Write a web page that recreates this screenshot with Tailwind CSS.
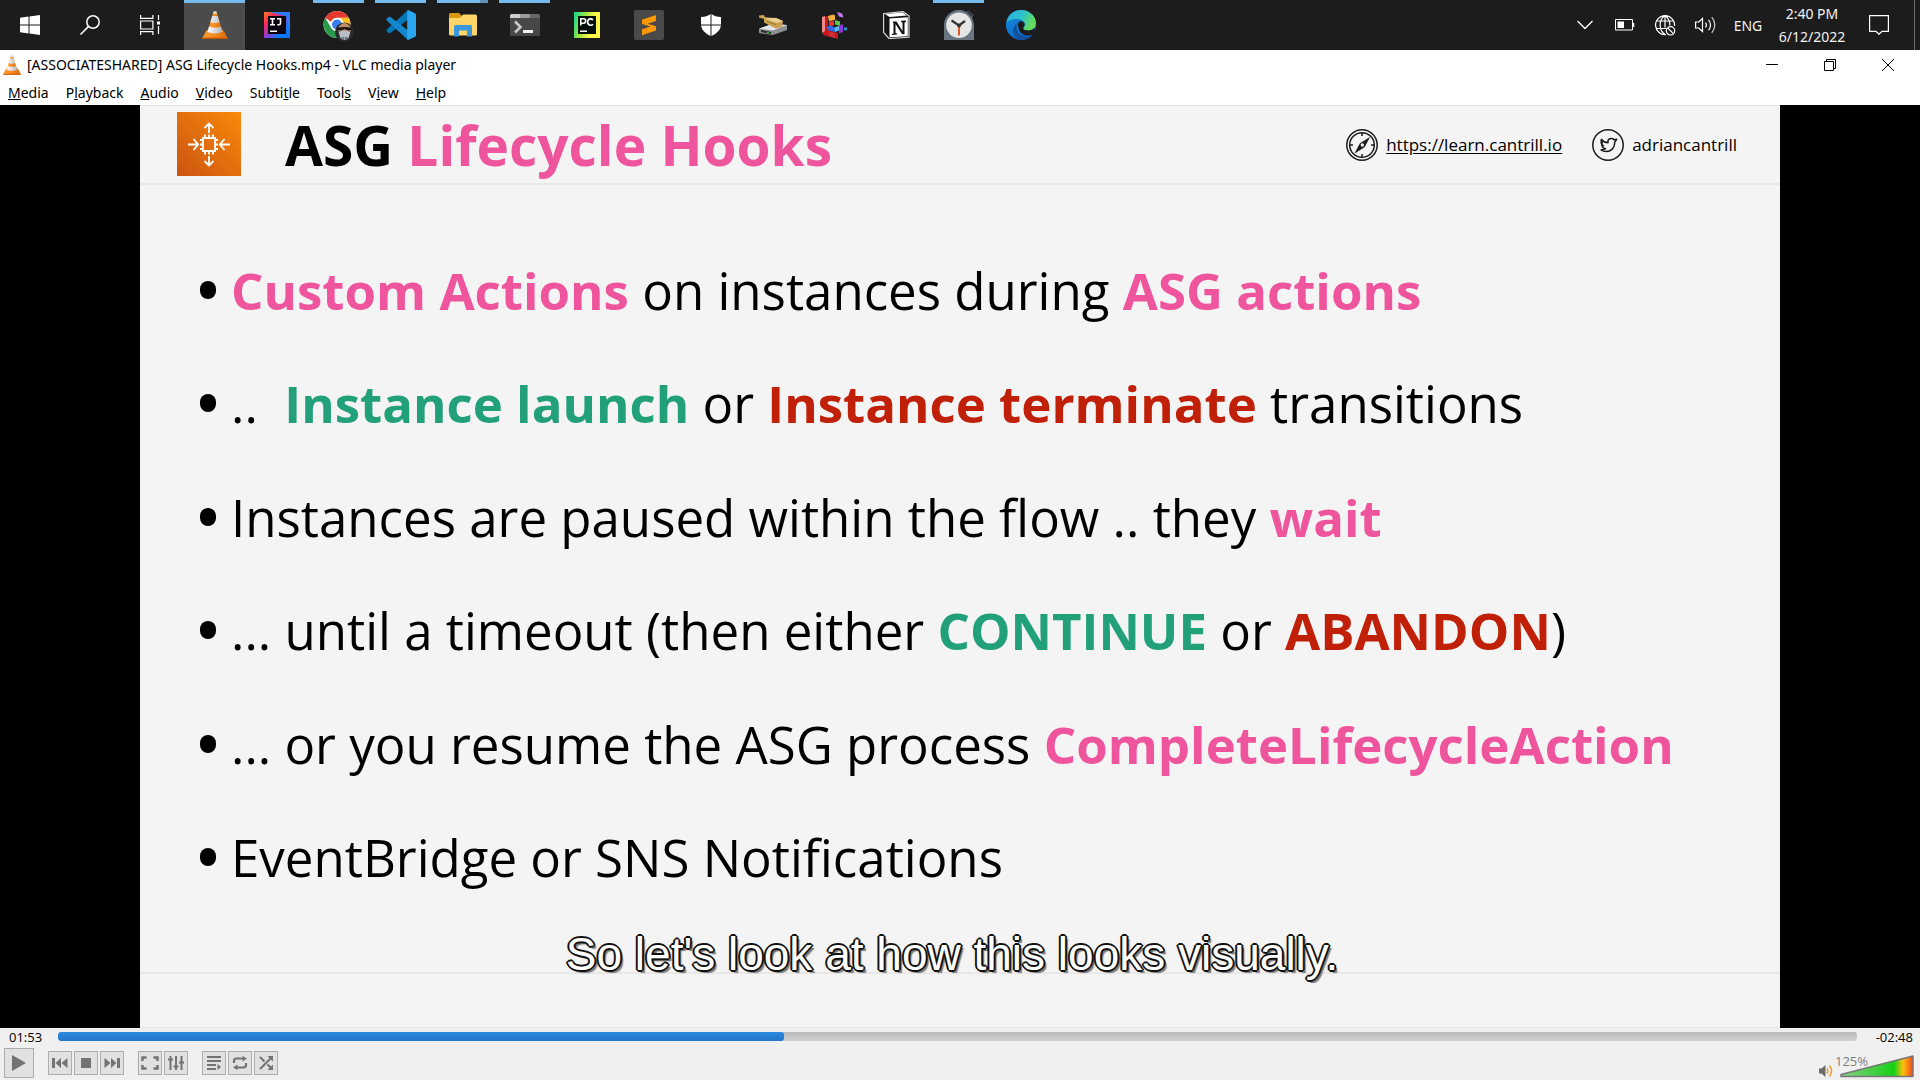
<!DOCTYPE html>
<html lang="en">
<head>
<meta charset="utf-8">
<title>[ASSOCIATESHARED] ASG Lifecycle Hooks.mp4 - VLC media player</title>
<script src="https://cdn.jsdelivr.net/npm/@tailwindcss/browser@4"></script>
</head>
<body class="flex h-screen flex-col overflow-hidden bg-[#f0f0f0] font-['Open_Sans',sans-serif] text-black">

<!-- Shared cone logo -->
<svg class="absolute size-0" aria-hidden="true">
  <defs>
    <linearGradient id="or" x1="0" x2="1"><stop offset="0" stop-color="#f9a03c"/><stop offset=".5" stop-color="#f68a1c"/><stop offset="1" stop-color="#d96a06"/></linearGradient>
    <linearGradient id="gr" x1="0" x2="1"><stop offset="0" stop-color="#fff"/><stop offset="1" stop-color="#b5b5b5"/></linearGradient>
    <symbol id="cone" viewBox="0 0 26 28">
      <path d="M5 19h16l1 1 3.600 7c.2.5 0 1-.6 1H1c-.6 0-.8-.5-.6-1L4 20z" fill="url(#or)"/>
      <path d="M.6 26.500h24.800c.4 1 .1 1.500-.4 1.500H1c-.6 0-.8-.6-.4-1.500z" fill="#c95c02"/>
      <path d="M11.600.6h2.800L20.500 21c-1.500 2.800-13.500 2.800-15 0z" fill="url(#or)"/>
      <path d="M10.300 5h5.400l1.900 6c-1.600 1.400-7.600 1.400-9.200 0zM7 15.500c2 1.500 10 1.500 12 0l1.400 5c-1.500 2.500-13.300 2.500-14.800 0z" fill="url(#gr)"/>
      <path d="M11.400 1c.3-1 2.900-1 3.200 0l.5 1.600c-.8.6-3.400.6-4.200 0z" fill="#d8d8d8"/>
    </symbol>
  </defs>
</svg>

<!-- Taskbar -->
<header class="flex h-[50px] shrink-0 items-stretch justify-between bg-[#1c1c1c] font-['Noto_Sans',sans-serif] text-[#f2f2f2]">
  <nav class="flex" aria-label="Taskbar">
    <button class="flex w-[60px] items-center justify-center" aria-label="Start"><svg class="size-5" viewBox="0 0 20 20" fill="#fff"><path d="M0 2.800 8.500 1.600V9.500H0zM9.500 1.400 20 0v9.500H9.500zM0 10.500h8.500v8L0 17.200zM9.500 10.500H20V20L9.500 18.600z"/></svg></button>
    <button class="flex w-[60px] items-center justify-center" aria-label="Search"><svg class="size-5" viewBox="0 0 20 20" fill="none" stroke="#fff" stroke-width="1.500"><circle cx="13" cy="7" r="6.200"/><path d="M8.600 11.400.5 19.500"/></svg></button>
    <button class="flex w-[64px] items-center pl-5" aria-label="Task View"><svg class="size-5" viewBox="0 0 20 20" fill="none" stroke="#fff" stroke-width="1.200"><path d="M.6 0v3.400h12.300V0M.6 20v-3.400h12.300V20M.6 6h12.300v8H.6zM18.500 0v5M18.500 11v8"/><path d="M17 6.500h3v3h-3z" fill="#fff" stroke="none"/></svg></button>

    <div class="flex gap-px">
      <button class="flex w-[61px] flex-col items-center border-t-[3px] border-[#76b9ed] bg-[#4b4b4b] pt-2" aria-label="VLC"><svg class="h-7 w-[26px]"><use href="#cone"/></svg></button>

      <button class="flex w-[61px] items-center justify-center" aria-label="IntelliJ IDEA"><svg class="size-[26px]" viewBox="0 0 26 26"><defs><linearGradient id="ij" x1="0" y1="0" x2="1" y2="1"><stop offset="0" stop-color="#fc801d"/><stop offset=".25" stop-color="#fe2857"/><stop offset=".5" stop-color="#9039d0"/><stop offset=".75" stop-color="#087cfa"/><stop offset="1" stop-color="#1c6cf5"/></linearGradient></defs><path d="M0 0h26v26H0z" fill="url(#ij)"/><path d="M5 0h21v19L22 4z" fill="#2c7df5"/><path d="M4 4h18v18H4z" fill="#0b0210"/><path d="M6 6.700h5M8.500 6.700v6M6 12.700h5M13 6.700h3.500v4.500q0 1.500-1.800 1.500h-1.500" stroke="#fff" stroke-width="1.600" fill="none"/><path d="M6 18.500h7v1.500H6z" fill="#fff"/></svg></button>

      <button class="flex w-[61px] flex-col items-center" aria-label="Google Chrome"><span class="h-[3px] w-[51px] bg-[#76b9ed]"></span><svg class="mt-2 h-[31px] w-[31px]" viewBox="0 0 31 31"><circle cx="14" cy="13.500" r="13.500" fill="#fff"/><path d="M2.300 6.800A13.500 13.500 0 0 1 25.700 6.800H14a6.700 6.700 0 0 0-6 4z" fill="#e5392f"/><path d="M2.300 6.800a13.500 13.500 0 0 0 11.700 20.200l5.800-10.100a6.700 6.700 0 0 1-11.600 0z" fill="#279b4b"/><path d="M25.700 6.800A13.500 13.500 0 0 1 14 27l5.800-10.100A6.700 6.700 0 0 0 17 7.300z" fill="#fbc116"/><circle cx="14" cy="13.500" r="6.300" fill="#fff"/><circle cx="14" cy="13.500" r="5" fill="#3b7de9"/><circle cx="21.500" cy="21" r="9.500" fill="#2a292b"/><path d="M15.500 16q6-8 12 0l.5 4h-13z" fill="#c58d64"/><path d="M14.500 16.800q7-1.800 14 0v2q-3.500 1.500-7-.8-3.500 2.300-7 .8z" fill="#15151b"/><path d="M15.500 20.500q6-1.500 12 0l-1.800 6.500q-4.200 4-8.400 0z" fill="#b9bdc5"/><path d="M18.500 26h6l-.5 2.500q-2.500 1.500-5 0z" fill="#3c3f46"/><path d="M20 26v2.800m1.500-2.800v3m1.500-3v2.800" stroke="#d5d8de" stroke-width=".7"/></svg></button>

      <button class="flex w-[61px] flex-col items-center" aria-label="Visual Studio Code"><span class="h-[3px] w-[51px] bg-[#76b9ed]"></span><svg class="mt-[7px] size-[30px]" viewBox="0 0 30 30"><path d="M22 0 1 19.200q-1.200 1 0 2.200l1.600 1.500q.9.700 1.900 0L24 8z" fill="#0077b9"/><path d="M22 30 1 10.800q-1.200-1 0-2.200l1.600-1.500q.9-.7 1.900 0L24 22z" fill="#1488cd"/><path d="M22.200 30q-1.200-.4-1-1.500V1.500q-.2-1.100 1-1.500L29 3.200q1 .5 1 1.600v20.400q0 1.100-1 1.600z" fill="#2aa7f0"/></svg></button>

      <button class="flex w-[61px] flex-col items-center" aria-label="File Explorer"><span class="h-[3px] w-[51px] border-r-[8px] border-[#5e92bb] bg-[#76b9ed]"></span><svg class="mt-2.5 h-[25px] w-[28px]" viewBox="0 0 28 25"><path d="M0 1.500Q0 0 1.500 0H10l3 3v6H0z" fill="#d99a12"/><path d="M0 5h11l3-3.500h12.500Q28 1.500 28 3v18q0 1.500-1.500 1.500h-25Q0 22.500 0 21z" fill="#fdd667"/><path d="M5 23.500v-9.500q0-2 2-2h14q2 0 2 2v9.500h-5v-6h-8v6z" fill="#3a96dd"/></svg></button>

      <button class="flex w-[61px] flex-col items-center" aria-label="Terminal"><span class="h-[3px] w-[51px] bg-[#76b9ed]"></span><svg class="mt-[11px] h-[22px] w-[30px]" viewBox="0 0 30 22"><rect width="30" height="22" rx="1.500" fill="#474747"/><path d="M0 4V1.500Q0 0 1.500 0H10v4z" fill="#ccc"/><path d="M10 0h10v4H10z" fill="#999"/><path d="M20 0h8.500Q30 0 30 1.500V4H20z" fill="#666"/><path d="M5 7.500 10.500 13 5 18.500" stroke="#c8c8c8" stroke-width="2.600" fill="none"/><path d="M13 16h10v3H13z" fill="#f2f2f2"/></svg></button>

      <button class="flex w-[61px] items-center justify-center" aria-label="PyCharm"><svg class="size-[26px]" viewBox="0 0 26 26"><defs><linearGradient id="pc" x1="0" y1=".3" x2="1" y2=".6"><stop offset="0" stop-color="#21d789"/><stop offset=".35" stop-color="#9fe83d"/><stop offset=".7" stop-color="#fcf84a"/></linearGradient></defs><path d="M0 0h26v26H0z" fill="url(#pc)"/><path d="M4 4h18v18H4z" fill="#041008"/><path d="M6.800 13.500V6.800h2.700q2.200 0 2.200 2.200t-2.200 2.200H7M19 8Q17.600 6.600 16 6.900q-2.300.5-2.300 3.200T16 13.200q1.800.3 3-1" stroke="#fff" stroke-width="1.600" fill="none"/><path d="M6 18.500h7v1.500H6z" fill="#fff"/></svg></button>

      <button class="flex w-[61px] items-center justify-center" aria-label="Sublime Text"><svg class="size-[30px]" viewBox="0 0 30 30"><rect width="30" height="30" rx="2" fill="#4a4a4a"/><path d="M22 5v6L13.500 13.700 22 16.300v4.200L8 25.300v-6L16.500 16.600 8 14V9.700z" fill="#ff9800"/></svg></button>

      <button class="flex w-[61px] items-center justify-center" aria-label="Windows Security"><svg class="h-[22px] w-5" viewBox="0 0 20 22" fill="#fff"><path d="M9.500 0v10.400H0V3q6 0 9.500-3zM10.500 0Q14 3 20 3v7.400h-9.500zM0 11.400h9.500V22Q1 18 0 11.400zM20 11.400h-9.500V22Q19 18 20 11.400z"/></svg></button>

      <button class="flex w-[61px] items-center justify-center" aria-label="Disk Utility"><svg class="h-5 w-[28px]" viewBox="0 0 28 20"><path d="M0 14l13-5 15 1v5l-14 5L0 18z" fill="#8c8f93"/><path d="M0 13.500 13 9l15 1-14 5.500z" fill="#e6e7e8"/><path d="M2 15l10 2v2L2 17z" fill="#252b25"/><path d="M8 16.800l2 .4v1l-2-.4z" fill="#35e035"/><path d="M0 .5 5 0l1 2.200L17 3l7 3-1 6-6 1.500L5 7.500V4L0 2.500z" fill="#c9a150"/><path d="M5 3.500 17 3l7 3-6 2z" fill="#ead08f"/><path d="M8 6.500l9 3" stroke="#8a6a28" stroke-width=".8"/></svg></button>

      <button class="flex w-[61px] items-center justify-center" aria-label="Disk Defragmenter"><svg class="size-[28px]" viewBox="0 0 28 28"><path d="M1 6l6-1v14l10 3v6L2 24z" fill="#c9161d"/><path d="M1 6l3-1v15l-3 2z" fill="#f08a8a"/><path d="M7 5l5-1.500 2 1V9l-6 1z" fill="#f7b13a"/><path d="M8 10.500 13 10v4.500l-5 .5z" fill="#e9382d"/><path d="M14 9l5 1.500v4.500l-5-1.500z" fill="#5fc552"/><path d="M5 16l5-1.500 4 2V21l-6-1.500z" fill="#2b6be8"/><path d="M13.500 16.500 18 15v4.500L14 21z" fill="#59b8f5"/><path d="M18 14.500l4-1.500v8l-4 1.500z" fill="#8f38d8"/><path d="M8 20.500l6 1.500v5l-6-2z" fill="#c8303a"/><path d="M16 1l5 1.500 1.500 4L18 5.500z" fill="#c77cf2"/><path d="M23 16.500h3v2.800h-3z" fill="#1e9ad6"/></svg></button>

      <button class="flex w-[61px] items-center justify-center" aria-label="Notion"><svg class="h-7 w-[27px]" viewBox="0 0 27 28"><path d="M.6 2.500 20 .6l6 4.200v21.500L6 27.500.6 21.500z" fill="#151515" stroke="#d5d5d5" stroke-width="1.200"/><path d="M2 3 19.500 1.500 24 4.600 6.500 6z" fill="#fff"/><path d="M6.500 7.500 24.800 6.300v19L6.500 26.300z" fill="#fff"/><path d="M9.500 10.500h4l6 9.500v-8.500l-1.500-.5v-1.200l5-.3V11l-1.500.5V23l-2.300.3L12.500 13v9l1.700.6v1L9 24v-1l1.500-.6V12z" fill="#111"/></svg></button>

      <button class="flex w-[61px] flex-col items-center" aria-label="Alarms and Clock"><span class="h-[3px] w-[51px] bg-[#76b9ed]"></span><svg class="mt-[7px] size-[30px]" viewBox="0 0 30 30"><path d="M0 15A15 15 0 0 1 22.500 2L24 .5 29.500 5 28 8q2 3 2 7v15H0z" fill="#697580"/><path d="M24 .5 29.500 5 27.500 7 22.500 2z" fill="#373c42"/><circle cx="15" cy="15.200" r="12.800" fill="#e6e6e6"/><path d="M7.500 10.500 15 15.500 21 11" stroke="#333" stroke-width="2.200" fill="none"/><path d="M15 15v10.500" stroke="#dd4719" stroke-width="1.800"/><circle cx="15" cy="15.500" r="2" fill="#333"/></svg></button>

      <button class="flex w-[61px] items-center justify-center" aria-label="Microsoft Edge"><svg class="size-[30px]" viewBox="0 0 30 30"><defs><linearGradient id="e1" x1="0" y1="0" x2="1" y2=".4"><stop offset="0" stop-color="#2aa9e8"/><stop offset=".55" stop-color="#2dc3cb"/><stop offset="1" stop-color="#66dc58"/></linearGradient><linearGradient id="e2" x1="0" y1="0" x2=".6" y2="1"><stop offset="0" stop-color="#1392dc"/><stop offset="1" stop-color="#0b62c4"/></linearGradient></defs><circle cx="15" cy="15" r="15" fill="url(#e2)"/><path d="M.4 12.500C2 4.500 8 0 15 0c9 0 15 6.500 15 13 0 5-3.500 7.500-7.500 7.500-3.500 0-5.300-1-5.300-2.300 0-.9 1.600-1.500 1.600-3.900 0-3-3.300-5.300-7.300-5.300C6 9 2 10.500.4 12.500z" fill="url(#e1)"/><path d="M11.500 13c-3 5 .5 13.500 8.500 13.800 3 .1 6-1.300 7-2.300C23 29.500 18 30.500 14 30 6.500 28 5 17 11.500 13z" fill="#124f9c"/><path d="M12 14.500c0-2.500 2.200-3.800 4.300-3.100 1.700.7 2.500 2 2.500 3.200 0 2.100-1.600 2.700-1.600 3.600 0 1.300 1.800 2.300 5.300 2.300 2.500 0 4.500-.9 5.800-2.400L30 24.500l-3-.3q-1.300 1.300-5.500 1.300C15 25.500 12 19.500 12 14.500z" fill="#1c1c1c"/></svg></button>
    </div>
  </nav>

  <div class="flex items-stretch pr-[5px] text-sm leading-[23px]">
    <button class="flex w-10 items-center justify-center" aria-label="Show hidden icons"><svg class="h-2.5 w-4" viewBox="0 0 16 10" fill="none" stroke="#fff" stroke-width="1.300"><path d="M.5 1 8 8.500 15.500 1"/></svg></button>
    <button class="flex w-10 items-center justify-center" aria-label="Battery"><svg class="h-3 w-5" viewBox="0 0 20 12"><path d="M.5.5h17v10.500H.5z" fill="none" stroke="#fff"/><path d="M2.500 2.500H9v6.500H2.500zM18 4h1.300v4H18z" fill="#fff"/></svg></button>
    <button class="flex w-10 items-center justify-center" aria-label="Network"><svg class="size-[21px]" viewBox="0 0 21 21" fill="none" stroke="#fff" stroke-width="1.200"><path d="M11 19.500A9.500 9.500 0 1 1 19.500 11M10 19.500C3.500 15 3.500 5 10 .6M10 .6c4 3 5 6.500 4.900 10M1.500 6h17M1 13.500h10.500M10 .6v12"/><circle cx="15.500" cy="15.800" r="4.200"/><path d="m12.600 13 5.900 5.600"/></svg></button>
    <button class="flex w-10 items-center justify-center" aria-label="Volume"><svg class="h-[18px] w-[21px]" viewBox="0 0 21 18" fill="none" stroke="#fff" stroke-width="1.200"><path d="M.6 6h3.200L7.500 2.500v13L3.800 12H.6z"/><path d="M10.500 6.500q1.800 2.500 0 5M13.500 3.800q4 5.200 0 10.400"/><path d="M16.800 1.200q6 7.800 0 15.600" stroke="#ccc"/></svg></button>
    <button class="w-[46px]">ENG</button>
    <button class="flex w-[82px] flex-col items-center pt-0.5"><span>2:40 PM</span><span>6/12/2022</span></button>
    <button class="flex w-[61px] items-center pl-4" aria-label="Notifications"><svg class="size-5" viewBox="0 0 20 20" fill="none" stroke="#fff" stroke-width="1.200"><path d="M.6.6h18.800v15.800H13L10 19.300 7 16.400H.6z"/></svg></button>
    <span class="w-px bg-[#6c6c6c]"></span>
  </div>
</header>

<!-- Window title and menu -->
<div class="flex h-[30px] shrink-0 items-center justify-between bg-white px-[3px] font-['Noto_Sans',sans-serif] text-sm">
  <div class="flex items-center gap-1.5"><svg class="h-5 w-[18px]"><use href="#cone"/></svg><span>[ASSOCIATESHARED] ASG Lifecycle Hooks.mp4 - VLC media player</span></div>
  <div class="flex">
    <button class="flex w-[58px] justify-center" aria-label="Minimize"><svg class="size-3" viewBox="0 0 12 12"><path d="M0 5h12v1H0z"/></svg></button>
    <button class="flex w-[58px] justify-center" aria-label="Restore"><svg class="size-3" viewBox="0 0 12 12" fill="none" stroke="#000"><path d="M.5 2.500h9v9h-9zM2.500 2.500v-2h9v9h-2"/></svg></button>
    <button class="flex w-[58px] justify-center" aria-label="Close"><svg class="size-3" viewBox="0 0 12 12" fill="none" stroke="#000"><path d="m0 0 12 12M12 0 0 12"/></svg></button>
  </div>
</div>
<nav class="flex h-[25px] shrink-0 items-center gap-[17px] bg-white pl-2 font-['Noto_Sans',sans-serif] text-sm" aria-label="Menu">
  <button><u>M</u>edia</button><button>P<u>l</u>ayback</button><button><u>A</u>udio</button><button><u>V</u>ideo</button><button>Subti<u>t</u>le</button><button>Tool<u>s</u></button><button>V<u>i</u>ew</button><button><u>H</u>elp</button>
</nav>

<!-- Video -->
<main class="flex min-h-0 flex-1 justify-center bg-black px-[140px]">
  <article class="relative flex w-full flex-col border-t border-b border-[#e4e4e4] bg-[#f4f4f4]">
    <div class="flex h-[79px] shrink-0 items-start border-b-2 border-[#e8e8e8] pl-[37px] pr-[43px]">
      <svg class="mt-1.5 size-16" viewBox="0 0 64 64"><defs><linearGradient id="aws" x1="0" y1="1" x2="1" y2="0"><stop offset="0" stop-color="#cb5412"/><stop offset="1" stop-color="#f98a09"/></linearGradient></defs><path d="M0 0h64v64H0z" fill="url(#aws)"/><g fill="none" stroke="#fff" stroke-width="1.800"><path d="M26 26h12v13H26zM28 22.500V26m4-3.500V26m4-3.500V26M28 39v3.500m4-3.500v3.500m4-3.500v3.500M23 28h3m-3 4.500h3m-3 4.500h3M38 28h3m-3 4.500h3m-3 4.500h3"/><path d="M32 21V11.500M27.500 16l4.500-4.500L36.500 16M32 44v9.500M27.500 49l4.500 4.500 4.500-4.500M11 32.500h10M16.500 27l4.700 5.500-4.700 5.500M53 32.500H43M47.500 27l-4.700 5.500 4.700 5.500"/></g></svg>
      <h1 class="ml-11 text-[55px] font-bold leading-[78px]">ASG <span class="text-[#ee559d]">Lifecycle Hooks</span></h1>
      <div class="ml-auto flex items-center self-center text-[17px] leading-6">
        <svg class="mr-2 size-8" viewBox="0 0 32 32" fill="none" stroke="#1a1a1a" stroke-width="1.500"><circle cx="16" cy="16" r="15.200"/><circle cx="16" cy="16" r="12.300"/><path d="M16 4v3m0 18v3M4 16h3m18 0h3"/><path d="M23.500 8.500 18.500 18l-9.500 6 5-9.500z" fill="#1a1a1a" stroke-width=".5"/><circle cx="16.300" cy="16" r="1.700" fill="#f3f3f3" stroke="none"/></svg>
        <a class="underline underline-offset-2" href="https://learn.cantrill.io">https://learn.cantrill.io</a>
        <svg class="ml-[30px] mr-2 size-8" viewBox="0 0 32 32" fill="none" stroke="#1a1a1a" stroke-width="1.500" stroke-linejoin="round"><circle cx="16" cy="16" r="15.200"/><path d="M9.500 10.500q2.500 3 6.500 3.300-.5-4.300 3.500-4.300 1.500 0 2.500 1.200l2.800-.5-2 3c0 6-4 9.300-8.500 9.300-2.500 0-4.300-.8-5.300-1.500 2 0 3.500-.5 4.500-1.300-2-.3-3-1.200-3.500-2.700l1.500-.2q-2.500-1.300-2.500-3.500l1.500.4q-2-1.500-1-3.200z"/></svg>
        <span>adriancantrill</span>
      </div>
    </div>

    <div class="flex flex-1 flex-col border-b-2 border-[#e8e8e8] pb-[58px] pl-[60px] pt-12">
      <ul class="grid flex-1 grid-rows-6 whitespace-nowrap text-[51px] leading-[70px]">
        <li class="flex items-center gap-[15px]"><i class="h-[18px] w-4 rounded-full bg-black"></i><p><b class="text-[#ee559d]">Custom Actions</b> on instances during <b class="text-[#ee559d]">ASG actions</b></p></li>
        <li class="flex items-center gap-[15px]"><i class="h-[18px] w-4 rounded-full bg-black"></i><p>..&nbsp; <b class="text-[#22a079]">Instance launch</b> or <b class="text-[#c02008]">Instance terminate</b> transitions</p></li>
        <li class="flex items-center gap-[15px]"><i class="h-[18px] w-4 rounded-full bg-black"></i><p>Instances are paused within the flow .. they <b class="text-[#ee559d]">wait</b></p></li>
        <li class="flex items-center gap-[15px]"><i class="h-[18px] w-4 rounded-full bg-black"></i><p>... until a timeout (then either <b class="text-[#22a079]">CONTINUE</b> or <b class="text-[#c02008]">ABANDON</b>)</p></li>
        <li class="flex items-center gap-[15px]"><i class="h-[18px] w-4 rounded-full bg-black"></i><p>... or you resume the ASG process <b class="text-[#ee559d]">CompleteLifecycleAction</b></p></li>
        <li class="flex items-center gap-[15px]"><i class="h-[18px] w-4 rounded-full bg-black"></i><p>EventBridge or SNS Notifications</p></li>
      </ul>
    </div>
    <div class="h-[53px] shrink-0"></div>
    <p class="absolute inset-x-0 bottom-[45px] pr-4 text-center font-['Liberation_Sans',sans-serif] text-[46px] leading-[56px] text-white [text-shadow:2px_0_#111,-2px_0_#111,0_2px_#111,0_-2px_#111,1px_1px_#111,-1px_1px_#111,1px_-1px_#111,-1px_-1px_#111,3px_3px_1px_#777]">So let's look at how this looks visually.</p>
  </article>
</main>

<!-- Playback controls -->
<footer class="flex h-[52px] shrink-0 flex-col text-[13px] leading-[18px]">
  <div class="flex h-[17px] items-center">
    <span class="w-[58px] pl-[9px]">01:53</span>
    <div class="h-[9px] flex-1 overflow-hidden rounded-[3px] bg-linear-to-b from-[#b8b8b8] to-[#d2d2d2]" role="progressbar" aria-label="Position"><div class="h-full rounded-[3px] bg-linear-to-b from-[#2a8be0] to-[#2577c9]" style="width:40.35%"></div></div>
    <span class="w-[63px] pr-[7px] text-right">-02:48</span>
  </div>
  <div class="flex flex-1 items-center pl-1">
    <button class="flex size-[30px] items-center justify-center border border-[#adadad] bg-[#e1e1e1]" aria-label="Play"><svg class="h-[18px] w-3.5" viewBox="0 0 14 18"><path d="M0 1v16L14 9z" fill="#737373"/></svg></button>
    <div class="ml-3.5 flex gap-0.5">
      <button class="flex size-6 items-center justify-center border border-[#adadad] bg-[#e1e1e1]" aria-label="Previous"><svg class="h-3 w-4" viewBox="0 0 16 12" fill="#737373"><path d="M0 1h3v10H0zM9 1v10L3.500 6zM15.500 1v10L9.500 6z"/></svg></button>
      <button class="flex size-6 items-center justify-center border border-[#adadad] bg-[#e1e1e1]" aria-label="Stop"><span class="size-2.5 bg-[#737373]"></span></button>
      <button class="flex size-6 items-center justify-center border border-[#adadad] bg-[#e1e1e1]" aria-label="Next"><svg class="h-3 w-4" viewBox="0 0 16 12" fill="#737373"><path d="M13 1h3v10h-3zM7 1v10l5.500-5zM.5 1v10l6-5z"/></svg></button>
    </div>
    <div class="ml-3.5 flex gap-0.5">
      <button class="flex size-6 items-center justify-center border border-[#adadad] bg-[#e1e1e1]" aria-label="Fullscreen"><svg class="h-3.5 w-[18px]" viewBox="0 0 18 14" fill="none" stroke="#737373" stroke-width="2.500"><path d="M1.500 5V1.500h4M12.500 1.500h4V5M16.500 9v3.500h-4M5.500 12.500h-4V9"/></svg></button>
      <button class="flex size-6 items-center justify-center border border-[#adadad] bg-[#e1e1e1]" aria-label="Extended settings"><svg class="h-3.5 w-4" viewBox="0 0 16 14" fill="none" stroke="#737373" stroke-width="2"><path d="M2.500 0v14M8 0v14M13.500 0v14M0 3.500h5M5.500 10.500h5M11 6.500h5"/></svg></button>
    </div>
    <div class="ml-3.5 flex gap-0.5">
      <button class="flex size-6 items-center justify-center border border-[#adadad] bg-[#e1e1e1]" aria-label="Playlist"><svg class="size-3.5" viewBox="0 0 14 14" fill="#737373"><path d="M0 0h14v2H0zM0 4h14v2H0zM0 8h9v2H0zM0 12h9v2H0zM10.500 8v6l3.500-3z"/></svg></button>
      <button class="flex size-6 items-center justify-center border border-[#adadad] bg-[#e1e1e1]" aria-label="Loop"><svg class="h-3.5 w-4" viewBox="0 0 16 14" fill="none" stroke="#737373" stroke-width="2.200"><path d="M2 7V5q0-2.500 2.500-2.500H13M14 7v2q0 2.500-2.500 2.500H3"/><path d="M10.500 0 15 2.500 10.500 5.500zM5.500 8.500 1 11.500l4.500 2.500z" fill="#737373" stroke="none"/></svg></button>
      <button class="flex size-6 items-center justify-center border border-[#adadad] bg-[#e1e1e1]" aria-label="Shuffle"><svg class="size-3.5" viewBox="0 0 14 14" fill="none" stroke="#737373" stroke-width="2"><path d="M1 13 12 2M1 1l4.500 4.500M8.500 8.500l3.500 3.500"/><path d="M8.500 0H14v5.500zM8.500 14H14V8.500z" fill="#737373" stroke="none"/></svg></button>
    </div>
    <div class="relative ml-auto flex h-[30px] items-end gap-[7px] pr-1.5">
      <svg class="h-3.5 w-3.5" viewBox="0 0 14 14" fill="none" stroke="#f8981d" stroke-width="1.500"><path d="M0 4.500h2.500L6.500 1v12L2.500 9.500H0z" fill="#6b6b6b" stroke="none"/><path d="M8 4.500q1.500 2.500 0 5M10.300 1.500q4.500 5.500 0 11"/></svg>
      <svg class="h-[23px] w-[74px]" viewBox="0 0 74 23" role="img" aria-label="Volume 125%"><defs><linearGradient id="vol" x1="0" x2="1"><stop offset="0" stop-color="#88cf88"/><stop offset=".74" stop-color="#16d016"/><stop offset=".86" stop-color="#ffc20e"/><stop offset="1" stop-color="#f2441c"/></linearGradient></defs><path d="M1 21.500V19.500L73 1v20.500z" fill="url(#vol)" stroke="#777" stroke-width="1.500" stroke-linejoin="round"/></svg>
      <span class="absolute left-4 top-1 text-[#808080]">125%</span>
    </div>
  </div>
</footer>
</body>
</html>
